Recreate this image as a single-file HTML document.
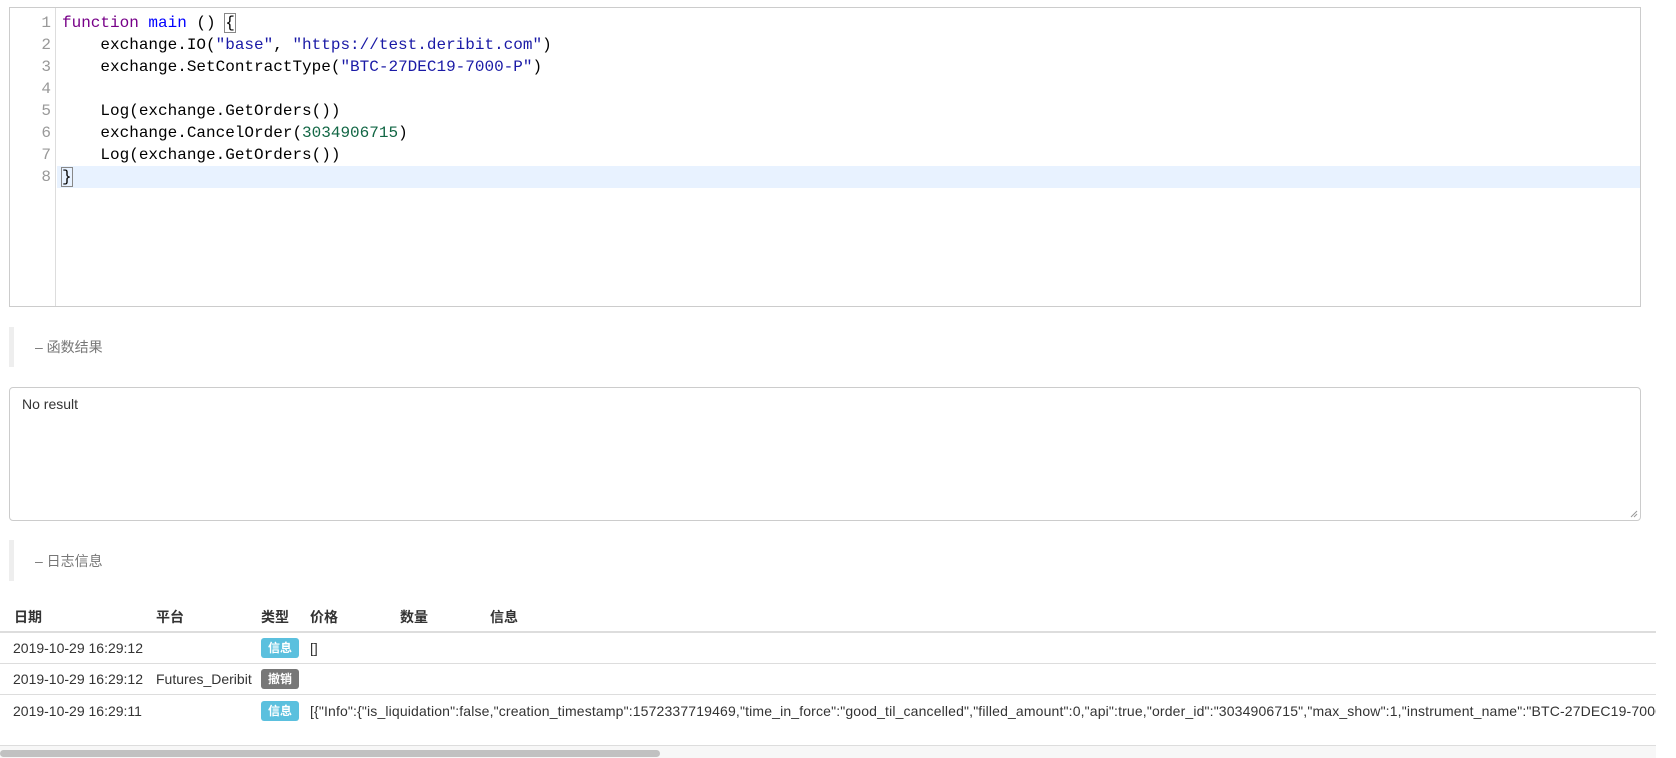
<!DOCTYPE html>
<html><head><meta charset="utf-8"><style>
*{margin:0;padding:0;box-sizing:border-box}
body{width:1676px;height:758px;background:#fff;position:relative;overflow:hidden;font-family:"Liberation Sans","Noto Sans CJK SC",sans-serif;color:#333;font-size:14px}
.ed{position:absolute;left:9px;top:7px;width:1632px;height:300px;border:1px solid #ccc;background:#fff}
.gut{position:absolute;left:0;top:0;width:46px;height:298px;border-right:1px solid #ddd}
.ln{position:absolute;left:0;width:41px;text-align:right;color:#999;font:16px/22px "Liberation Mono",monospace}
.cl{position:absolute;left:51px;font:16px/22px "Liberation Mono",monospace;color:#000;white-space:pre;right:0;padding-left:1px}
.k{color:#708}.f{color:#00f}.s{color:#1a1aa6}.n{color:#164}
.br{outline:1px solid #888}
.sec{position:absolute;left:9px;width:5px;background:#eee}
.st{position:absolute;left:35px;color:#777;font-size:14px}
.ta{position:absolute;left:9px;top:387px;width:1632px;height:134px;border:1px solid #ccc;border-radius:4px;padding:8px 12px;font-size:14px;color:#333}
.th{position:absolute;top:607px;font-weight:bold;font-size:14px}
.td{position:absolute;font-size:14px;white-space:nowrap}
.hl{position:absolute;left:0;width:1656px;background:#ddd}
.bd{position:absolute;left:261px;width:38px;height:20px;border-radius:3px;color:#fff;font-size:12px;font-weight:bold;text-align:center;line-height:20px}
</style></head><body>
<div class="ed">
<div class="gut"></div>
<div style="position:absolute;left:47px;right:0;top:158px;height:22px;background:#e8f2ff"></div>
<div class="ln" style="top:4px">1</div><div class="ln" style="top:26px">2</div><div class="ln" style="top:48px">3</div><div class="ln" style="top:70px">4</div><div class="ln" style="top:92px">5</div><div class="ln" style="top:114px">6</div><div class="ln" style="top:136px">7</div><div class="ln" style="top:158px">8</div>
<div class="cl" style="top:4px"><span class="k">function</span> <span class="f">main</span> () <span class="br">{</span></div>
<div class="cl" style="top:26px">    exchange.IO(<span class="s">"base"</span>, <span class="s">"https://test.deribit.com"</span>)</div>
<div class="cl" style="top:48px">    exchange.SetContractType(<span class="s">"BTC-27DEC19-7000-P"</span>)</div>
<div class="cl" style="top:92px">    Log(exchange.GetOrders())</div>
<div class="cl" style="top:114px">    exchange.CancelOrder(<span class="n">3034906715</span>)</div>
<div class="cl" style="top:136px">    Log(exchange.GetOrders())</div>
<div class="cl" style="top:158px"><span class="br">}</span></div>
</div>
<div class="sec" style="top:327px;height:40px"></div>
<div class="st" style="top:337px">– 函数结果</div>
<div class="ta">No result
<svg style="position:absolute;right:2px;bottom:2px" width="8" height="8"><path d="M1 7L7 1M4 7L7 4" stroke="#999" stroke-width="1"/></svg></div>
<div class="sec" style="top:540px;height:41px"></div>
<div class="st" style="top:551px">– 日志信息</div>
<div class="th" style="left:14px">日期</div><div class="th" style="left:156px">平台</div><div class="th" style="left:261px">类型</div><div class="th" style="left:310px">价格</div><div class="th" style="left:400px">数量</div><div class="th" style="left:490px">信息</div>
<div class="hl" style="top:631px;height:2px"></div>
<div class="hl" style="top:663px;height:1px"></div>
<div class="hl" style="top:694px;height:1px"></div>
<div class="hl" style="top:745px;height:1px"></div>
<div class="td" style="left:13px;top:640px">2019-10-29 16:29:12</div>
<div class="bd" style="top:638px;background:#5bc0de">信息</div>
<div class="td" style="left:310px;top:640px">[]</div>
<div class="td" style="left:13px;top:671px">2019-10-29 16:29:12</div>
<div class="td" style="left:156px;top:671px">Futures_Deribit</div>
<div class="bd" style="top:669px;background:#777">撤销</div>
<div class="td" style="left:13px;top:703px">2019-10-29 16:29:11</div>
<div class="bd" style="top:701px;background:#5bc0de">信息</div>
<div class="td" style="left:310px;top:703px;width:1346px;overflow:hidden;letter-spacing:0.15px">[{"Info":{"is_liquidation":false,"creation_timestamp":1572337719469,"time_in_force":"good_til_cancelled","filled_amount":0,"api":true,"order_id":"3034906715","max_show":1,"instrument_name":"BTC-27DEC19-7000-P"</div>
<div style="position:absolute;left:0;top:746px;width:1656px;height:12px;background:#f7f7f7"></div>
<div style="position:absolute;left:0;top:750px;width:660px;height:7px;border-radius:4px;background:#c1c1c1"></div>
</body></html>
